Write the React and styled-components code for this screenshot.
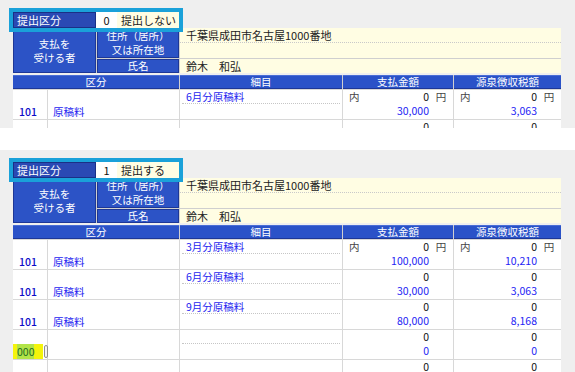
import React from 'react';
import styled, { createGlobalStyle } from 'styled-components';

const GlobalStyle = createGlobalStyle`
  html, body {
    margin: 0;
    padding: 0;
    background: #ffffff;
  }
  body {
    font-family: "Noto Sans CJK JP", "Noto Sans", sans-serif;
    font-size: 11px;
    color: #222;
  }
`;

const Page = styled.div`
  display: flex;
  flex-direction: column;
  gap: 22px;
  width: 575px;
`;

const Panel = styled.section`
  box-sizing: border-box;
  height: ${(p) => p.$height}px;
  overflow: hidden;
  background: #efefef;
  padding: 12px 14px 0 13px;
`;

const SubmitRow = styled.div`
  position: relative;
  z-index: 1;
  display: flex;
  width: 166px;
  height: 16px;
  line-height: 16px;
  outline: 4px solid #1aa1d9;
`;

const SubmitLabel = styled.div`
  width: 83px;
  padding-left: 4px;
  box-sizing: border-box;
  background: #2a49b4;
  color: #fff;
  box-shadow: inset 0 0 0 1px #1b2f86;
`;

const SubmitCode = styled.div`
  width: 21px;
  background: #fff;
  text-align: center;
  color: #111;
`;

const SubmitText = styled.div`
  flex: 1;
  padding-left: 4px;
  background: #fffde3;
  color: #222;
`;

const Table = styled.div`
  width: 548px;
`;

const PayeeGrid = styled.div`
  display: grid;
  grid-template-columns: 83px 82px 1fr;
  grid-template-rows: 30px 14px;
  gap: 1px;
  background: #cfcfcf;
`;

const BlueCell = styled.div`
  display: flex;
  align-items: center;
  justify-content: center;
  text-align: center;
  background: #2c53c6;
  color: #fff;
  font-size: 10.5px;
  line-height: 14px;
  box-shadow: inset 0 0 0 1px #1d3796;
  grid-row: ${(p) => p.$span || 'auto'};
`;

const CreamCell = styled.div`
  background: #fffde3;
  color: #222;
  padding-left: 6px;
  line-height: 14px;
`;

const AddressCell = styled(CreamCell)`
  display: grid;
  grid-template-rows: 15px 15px;
  padding: 0;
`;

const AddressLine = styled.div`
  padding-left: 6px;
  line-height: 14px;
  border-bottom: ${(p) => (p.$dotted ? '1px dotted #c9c9c9' : 'none')};
`;

const HeadRow = styled.div`
  display: grid;
  grid-template-columns: 166px 162px 110px 1fr;
  gap: 1px;
  margin-top: 2px;
  background: #cfcfcf;
  height: 14px;
`;

const HeadCell = styled(BlueCell)`
  line-height: 14px;
  background: #2a52c8;
  box-shadow: inset 0 1px 0 #4a6ed6, inset 0 -1px 0 #1d3796;
`;

const DataRow = styled.div`
  display: grid;
  grid-template-columns: 34px 131px 162px 110px 1fr;
  column-gap: 1px;
  padding-top: 1px;
  background: #d8d8d8;
  font-size: 10.5px;
`;

const Cell = styled.div`
  display: grid;
  grid-template-rows: 14px 15px;
  background: #fff;
  line-height: 14px;
`;

const CodeText = styled.div`
  grid-row: 2;
  padding-left: 6px;
  line-height: 16px;
  color: #0c0cc8;
  font-weight: 500;
`;

const CodeInput = styled.div`
  grid-row: 2;
  display: flex;
  align-items: stretch;
  height: 15px;
`;

const InputBox = styled.span`
  width: 30px;
  background: #f4f40c;
  padding-left: 4px;
  box-sizing: border-box;
  line-height: 15px;
`;

const Selected = styled.span`
  background: #b2e448;
  color: #1f6a1f;
`;

const Grip = styled.span`
  width: 2px;
  margin: 1px 0 1px 1px;
  border: 1px solid #8e8e8e;
  border-radius: 2px;
  background: #f4f4f4;
`;

const NameText = styled.div`
  grid-row: 2;
  padding-left: 5px;
  line-height: 16px;
  color: #2323f0;
`;

const ItemTop = styled.div`
  margin: 0 2px;
  padding-left: 4px;
  color: #1e1ef0;
  border-bottom: 1px dotted #c6c6c6;
`;

const AmountLine = styled.div`
  display: grid;
  grid-template-columns: 1fr auto 24px;
  height: 14px;
  line-height: 14px;
`;

const Prefix = styled.span`
  padding-left: 6px;
  color: #444;
`;

const Value = styled.span`
  text-align: right;
  color: ${(p) => (p.$blue ? '#2424f4' : '#111')};
`;

const Unit = styled.span`
  text-align: center;
  color: #444;
`;

const Amount = ({ top, bottom, prefixed }) => (
  <Cell>
    <AmountLine>
      <Prefix>{prefixed ? '内' : ''}</Prefix>
      <Value>{top}</Value>
      <Unit>{prefixed ? '円' : ''}</Unit>
    </AmountLine>
    <AmountLine>
      <span />
      <Value $blue>{bottom}</Value>
      <span />
    </AmountLine>
  </Cell>
);

const Row = ({ row }) => (
  <DataRow>
    <Cell>
      {row.input ? (
        <CodeInput>
          <InputBox>
            <Selected>000</Selected>
          </InputBox>
          <Grip />
        </CodeInput>
      ) : (
        <CodeText>{row.code}</CodeText>
      )}
    </Cell>
    <Cell>
      <NameText>{row.name}</NameText>
    </Cell>
    <Cell>
      <ItemTop>{row.item}</ItemTop>
    </Cell>
    <Amount top={row.payTop} bottom={row.pay} prefixed={row.prefixed} />
    <Amount top={row.taxTop} bottom={row.tax} prefixed={row.prefixed} />
  </DataRow>
);

const SheetPanel = ({ height, code, label, rows }) => (
  <Panel $height={height}>
    <SubmitRow>
      <SubmitLabel>提出区分</SubmitLabel>
      <SubmitCode>{code}</SubmitCode>
      <SubmitText>{label}</SubmitText>
    </SubmitRow>
    <Table>
      <PayeeGrid>
        <BlueCell $span="1 / 3">
          支払を
          <br />
          受ける者
        </BlueCell>
        <BlueCell>
          住所（居所）
          <br />
          又は所在地
        </BlueCell>
        <AddressCell>
          <AddressLine $dotted>千葉県成田市名古屋1000番地</AddressLine>
          <AddressLine />
        </AddressCell>
        <BlueCell>氏名</BlueCell>
        <CreamCell>鈴木　和弘</CreamCell>
      </PayeeGrid>
      <HeadRow>
        <HeadCell>区分</HeadCell>
        <HeadCell>細目</HeadCell>
        <HeadCell>支払金額</HeadCell>
        <HeadCell>源泉徴収税額</HeadCell>
      </HeadRow>
      {rows.map((row, i) => (
        <Row key={i} row={row} />
      ))}
    </Table>
  </Panel>
);

const firstRows = [
  { code: '101', name: '原稿料', item: '6月分原稿料', prefixed: true, payTop: '0', pay: '30,000', taxTop: '0', tax: '3,063' },
  { code: '', name: '', item: '', payTop: '0', pay: '', taxTop: '0', tax: '' },
];

const secondRows = [
  { code: '101', name: '原稿料', item: '3月分原稿料', prefixed: true, payTop: '0', pay: '100,000', taxTop: '0', tax: '10,210' },
  { code: '101', name: '原稿料', item: '6月分原稿料', payTop: '0', pay: '30,000', taxTop: '0', tax: '3,063' },
  { code: '101', name: '原稿料', item: '9月分原稿料', payTop: '0', pay: '80,000', taxTop: '0', tax: '8,168' },
  { input: true, name: '', item: '', payTop: '0', pay: '0', taxTop: '0', tax: '0' },
  { code: '', name: '', item: '', payTop: '0', pay: '0', taxTop: '0', tax: '0' },
];

export default function App() {
  return (
    <>
      <GlobalStyle />
      <Page>
        <SheetPanel height={128} code="0" label="提出しない" rows={firstRows} />
        <SheetPanel height={222} code="1" label="提出する" rows={secondRows} />
      </Page>
    </>
  );
}
